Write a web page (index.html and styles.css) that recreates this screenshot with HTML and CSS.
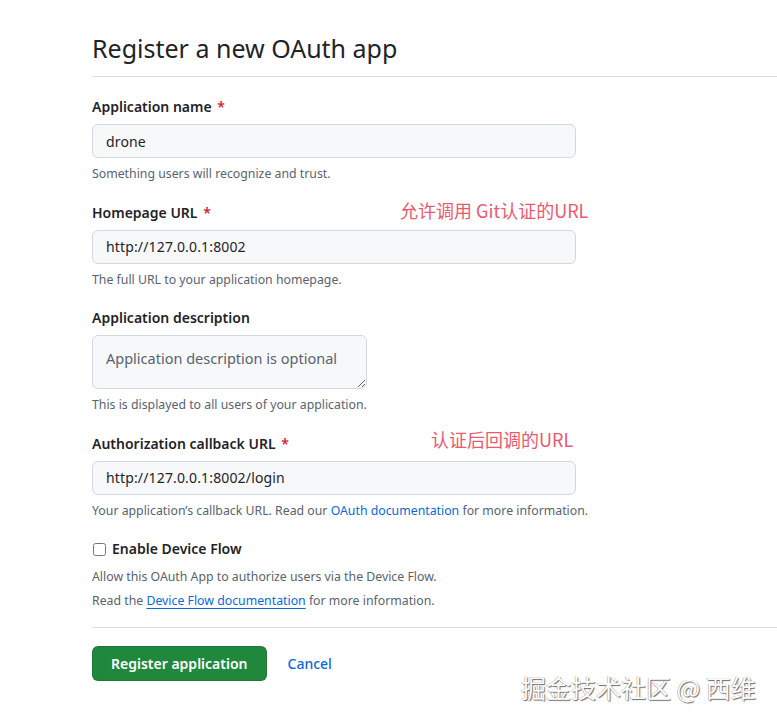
FILE: index.html
```html
<!DOCTYPE html>
<html lang="en">
<head>
<meta charset="utf-8">
<title>Register a new OAuth app</title>
<link rel="stylesheet" href="styles.css">
</head>
<body>
<div class="page">
  <h1 class="title">Register a new OAuth app</h1>
  <form class="form">
    <div class="group">
      <label class="label">Application name <span class="req">*</span></label>
      <input class="input" type="text" value="drone">
      <p class="note">Something users will recognize and trust.</p>
    </div>
    <div class="group">
      <label class="label">Homepage URL <span class="req">*</span></label>
      <input class="input" type="text" value="http://127.0.0.1:8002">
      <p class="note">The full URL to your application homepage.</p>
    </div>
    <div class="group">
      <label class="label">Application description</label>
      <textarea class="textarea" placeholder="Application description is optional"></textarea>
      <p class="note">This is displayed to all users of your application.</p>
    </div>
    <div class="group">
      <label class="label">Authorization callback URL <span class="req">*</span></label>
      <input class="input" type="text" value="http://127.0.0.1:8002/login">
      <p class="note">Your application’s callback URL. Read our <a class="link" href="#">OAuth documentation</a> for more information.</p>
    </div>
    <div class="group group-last">
      <label class="check-label"><input class="checkbox" type="checkbox"> Enable Device Flow</label>
      <p class="note note-lg">Allow this OAuth App to authorize users via the Device Flow.</p>
      <p class="note note-lg">Read the <a class="link link-u" href="#">Device Flow documentation</a> for more information.</p>
    </div>
    <div class="actions">
      <button class="btn-primary" type="button">Register application</button>
      <a class="cancel" href="#">Cancel</a>
    </div>
  </form>
  <div class="anno anno-1">允许调用 Git认证的URL</div>
  <div class="anno anno-2">认证后回调的URL</div>
</div>
<div class="watermark">掘金技术社区 @ 西维</div>
</body>
</html>
```
FILE: styles.css
```css
html, body {
  margin: 0;
  padding: 0;
  background: #ffffff;
}
body {
  font-family: "Noto Sans", "Open Sans", "Liberation Sans", "Noto Sans CJK SC", sans-serif;
  color: #1f2328;
  width: 777px;
  height: 722px;
  overflow: hidden;
  position: relative;
}
.page {
  position: relative;
  padding: 30px 0 0 92px;
}
.title {
  margin: 0;
  font-size: 25px;
  font-weight: 400;
  line-height: 36px;
  padding-bottom: 10px;
  border-bottom: 1px solid #d8dee4;
}
.form {
  padding-top: 20px;
}
.group {
  margin-bottom: 19.5px;
}
.group-last {
  margin-bottom: 14px;
}
.label, .check-label {
  display: block;
  font-size: 14px;
  font-weight: 600;
  line-height: 20px;
  margin-bottom: 7px;
}
.req {
  color: #d1242f;
  margin-left: 2px;
}
.input {
  display: block;
  box-sizing: border-box;
  width: 484px;
  height: 34px;
  padding: 0 13px;
  font-family: inherit;
  font-size: 14px;
  letter-spacing: 0.15px;
  color: #1f2328;
  background: #f6f8fa;
  border: 1px solid #d1d9e0;
  border-radius: 6px;
  outline: none;
}
.textarea {
  display: block;
  box-sizing: border-box;
  width: 275px;
  height: 54px;
  padding: 12px 13px;
  font-family: inherit;
  font-size: 14.5px;
  line-height: 20px;
  color: #1f2328;
  background: #f6f8fa;
  border: 1px solid #d1d9e0;
  border-radius: 6px;
  outline: none;
  resize: vertical;
}
.textarea::placeholder {
  color: #59636e;
}
.note {
  margin: 7px 0 0;
  font-size: 12.3px;
  line-height: 18px;
  color: #59636e;
  white-space: nowrap;
}
.note-lg {
  line-height: 24px;
  margin-top: 6px;
}
.note-lg + .note-lg {
  margin-top: 0;
}
.link {
  color: #0969da;
  text-decoration: none;
}
.link-u {
  text-decoration: underline;
  text-underline-offset: 3px;
}
.check-label {
  display: flex;
  align-items: center;
  gap: 6px;
  margin-bottom: 0;
}
.checkbox {
  margin: 0 0 0 1px;
  width: 13px;
  height: 13px;
}
.actions {
  display: flex;
  align-items: center;
  gap: 21px;
  border-top: 1px solid #d8dee4;
  padding-top: 18px;
}
.btn-primary {
  height: 35px;
  padding: 0 18px;
  font-family: inherit;
  font-size: 14px;
  font-weight: 600;
  color: #ffffff;
  background: #1f883d;
  border: 1px solid rgba(31, 35, 40, 0.15);
  border-radius: 6px;
  cursor: pointer;
}
.cancel {
  font-size: 14px;
  font-weight: 500;
  color: #0969da;
  text-decoration: none;
}
.anno {
  position: absolute;
  font-family: "Noto Sans CJK SC", sans-serif;
  font-size: 18px;
  line-height: 24px;
  color: #e95a6f;
  white-space: nowrap;
}
.anno-1 {
  left: 400px;
  top: 198px;
}
.anno-2 {
  left: 431px;
  top: 427px;
}
.watermark {
  position: absolute;
  left: 521px;
  top: 670px;
  font-family: "Noto Sans CJK SC", sans-serif;
  font-size: 25px;
  line-height: 34px;
  color: #ffffff;
  text-shadow: 1px 1px 1px #6b6b6b, -0.5px -0.5px 0.5px #9a9a9a;
  white-space: nowrap;
}
```
